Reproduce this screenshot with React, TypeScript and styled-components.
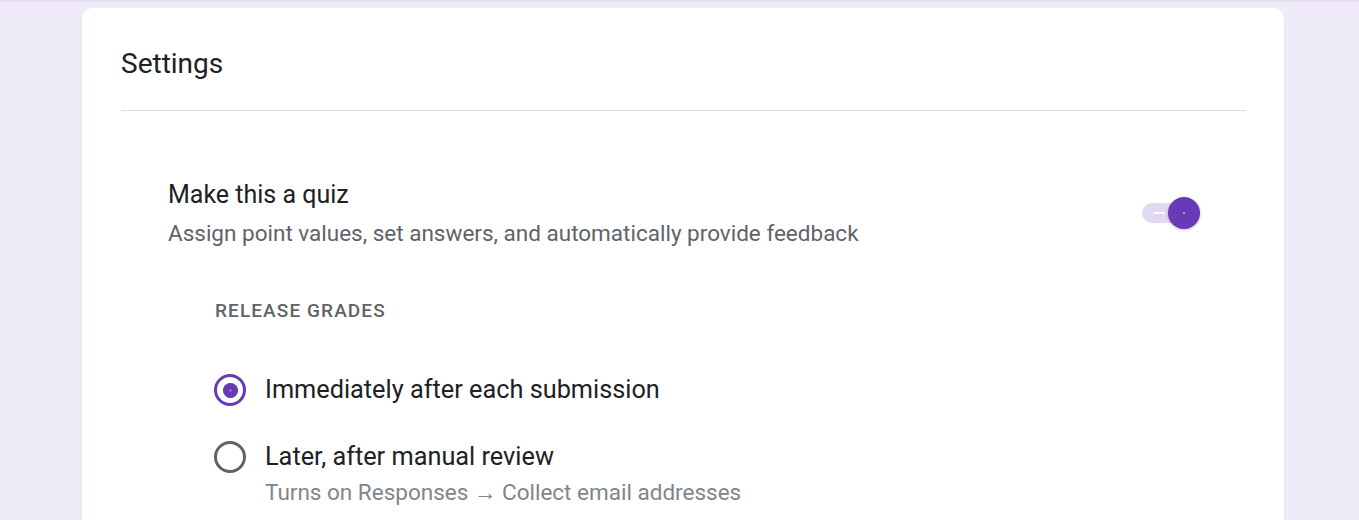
import styled, { createGlobalStyle } from 'styled-components';

const GlobalStyle = createGlobalStyle`
  body {
    margin: 0;
    background: #f0ebf8;
    font-family: Roboto, "Liberation Sans", sans-serif;
    color: #202124;
  }
`;

const Page = styled.div`
  height: 520px;
  overflow: hidden;
  border-top: 2px solid #e6e0f1;
  padding: 6px 75px 0 82px;
  box-sizing: border-box;
`;

const Card = styled.div`
  background: #fff;
  border-radius: 10px;
  box-shadow: 0 1px 2px rgba(60, 64, 67, 0.12);
  padding: 0 38px 0 39px;
  height: 560px;
`;

const Header = styled.div`
  padding: 40px 0 30px;
  line-height: 32px;
  font-size: 28px;
  border-bottom: 1px solid #dadce0;
`;

const QuizSection = styled.div`
  padding: 69px 46px 0 47px;
`;

const QuizRow = styled.div`
  display: flex;
  justify-content: space-between;
  align-items: center;
`;

const QuizTitle = styled.div`
  font-size: 25px;
  line-height: 30px;
`;

const QuizDesc = styled.div`
  margin-top: 9px;
  font-size: 22.5px;
  line-height: 28px;
  color: #5f6368;
`;

const Switch = styled.div`
  position: relative;
  width: 58px;
  height: 20px;
  border-radius: 10px;
  background: #e1d8f1;
  margin-top: -2px;
`;

const SwitchDash = styled.div`
  position: absolute;
  left: 11px;
  top: 9px;
  width: 12px;
  height: 2px;
  border-radius: 1px;
  background: #fff;
`;

const SwitchThumb = styled.div`
  position: absolute;
  right: 0;
  top: -6px;
  width: 32px;
  height: 32px;
  border-radius: 50%;
  background: #673ab7;
  box-shadow: 0 1px 3px rgba(0, 0, 0, 0.25);
  display: flex;
  align-items: center;
  justify-content: center;

  &::after {
    content: '';
    width: 2px;
    height: 2px;
    border-radius: 50%;
    background: #c9b8e8;
  }
`;

const Grades = styled.div`
  padding-left: 47px;
  margin-top: 52px;
`;

const GradesLabel = styled.div`
  font-size: 19px;
  line-height: 24px;
  font-weight: 500;
  letter-spacing: 1.1px;
  color: #5f6368;
  text-transform: uppercase;
`;

const Options = styled.div`
  margin-top: 51px;
  display: flex;
  flex-direction: column;
  gap: 35px;
`;

const Option = styled.div`
  display: flex;
  align-items: flex-start;
  gap: 19px;
`;

const Radio = styled.div<{ checked: boolean }>`
  flex: none;
  width: 32px;
  height: 32px;
  margin-left: -1px;
  box-sizing: border-box;
  border-radius: 50%;
  border: 3px solid ${(p) => (p.checked ? '#673ab7' : '#5f6368')};
  display: flex;
  align-items: center;
  justify-content: center;

  &::after {
    content: '';
    display: ${(p) => (p.checked ? 'block' : 'none')};
    width: 15px;
    height: 15px;
    border-radius: 50%;
    background: #b9a3e0;
    box-shadow: inset 0 0 0 6.5px #673ab7;
  }
`;

const OptionText = styled.div`
  display: flex;
  flex-direction: column;
`;

const OptionLabel = styled.div`
  font-size: 25.3px;
  line-height: 32px;
`;

const OptionSub = styled.div`
  margin-top: 5px;
  font-size: 22.5px;
  line-height: 28px;
  color: #80868b;
`;

const options = [
  { label: 'Immediately after each submission', checked: true },
  { label: 'Later, after manual review', checked: false, sub: 'Turns on Responses \u2192 Collect email addresses' },
];

export default function App() {
  return (
    <>
      <GlobalStyle />
      <Page>
        <Card>
          <Header>Settings</Header>
          <QuizSection>
            <QuizRow>
              <div>
                <QuizTitle>Make this a quiz</QuizTitle>
                <QuizDesc>Assign point values, set answers, and automatically provide feedback</QuizDesc>
              </div>
              <Switch>
                <SwitchDash />
                <SwitchThumb />
              </Switch>
            </QuizRow>
            <Grades>
              <GradesLabel>Release grades</GradesLabel>
              <Options>
                {options.map((o) => (
                  <Option key={o.label}>
                    <Radio checked={o.checked} />
                    <OptionText>
                      <OptionLabel>{o.label}</OptionLabel>
                      {o.sub && <OptionSub>{o.sub}</OptionSub>}
                    </OptionText>
                  </Option>
                ))}
              </Options>
            </Grades>
          </QuizSection>
        </Card>
      </Page>
    </>
  );
}
